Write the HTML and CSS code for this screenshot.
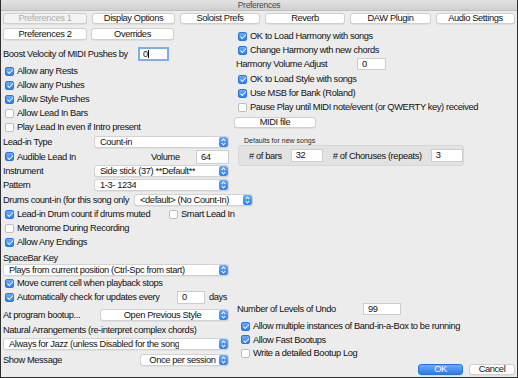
FILE: index.html
```html
<!DOCTYPE html>
<html lang="en">
  <head>
    <meta charset="UTF-8" />
    <title>Preferences</title>
    <link rel="stylesheet" href="styles.css">
  </head>
  <body>
    <div class="window">
      <div class="titlebar">Preferences</div>

      <div class="tabs">
        <button class="btn disabled">Preferences 1</button>
        <button class="btn">Display Options</button>
        <button class="btn">Soloist Prefs</button>
        <button class="btn">Reverb</button>
        <button class="btn">DAW Plugin</button>
        <button class="btn">Audio Settings</button>
      </div>

      <div class="main">
        <!-- left column -->
        <div class="col left">
          <div class="row btn-row">
            <button class="btn w84">Preferences 2</button>
            <button class="btn w83">Overrides</button>
          </div>
          <div class="row boost">
            <span class="lbl w135">Boost Velocity of MIDI Pushes by</span>
            <span class="field focus">0</span>
          </div>
          <div class="row mt3"><span class="cb on"></span>Allow any Rests</div>
          <div class="row"><span class="cb on"></span>Allow any Pushes</div>
          <div class="row"><span class="cb on"></span>Allow Style Pushes</div>
          <div class="row"><span class="cb"></span>Allow Lead In Bars</div>
          <div class="row"><span class="cb"></span>Play Lead In even if Intro present</div>
          <div class="row h15">
            <span class="lbl w91">Lead-in Type</span>
            <div class="sel w135"><span>Count-in</span><i class="step"></i></div>
          </div>
          <div class="row h15">
            <span class="cb on"></span>Audible Lead In
            <span class="lbl vol">Volume</span>
            <span class="field w33">64</span>
          </div>
          <div class="row">
            <span class="lbl w91">Instrument</span>
            <div class="sel w135"><span>Side stick (37) **Default**</span><i class="step"></i></div>
          </div>
          <div class="row">
            <span class="lbl w91">Pattern</span>
            <div class="sel w135"><span>1-3- 1234</span><i class="step"></i></div>
          </div>
          <div class="row h15">
            <span class="lbl w131">Drums count-in (for this song only</span>
            <div class="sel w119"><span>&lt;default&gt; (No Count-In)</span><i class="step"></i></div>
          </div>
          <div class="row">
            <span class="lbl w164"><span class="cb on"></span>Lead-in Drum count if drums muted</span>
            <span class="cb"></span>Smart Lead In
          </div>
          <div class="row"><span class="cb"></span>Metronome During Recording</div>
          <div class="row"><span class="cb on"></span>Allow Any Endings</div>
          <div class="row caption">SpaceBar Key</div>
          <div class="row h13">
            <div class="sel full"><span>Plays from current position (Ctrl-Spc from start)</span><i class="step"></i></div>
          </div>
          <div class="row"><span class="cb on"></span>Move current cell when playback stops</div>
          <div class="row">
            <span class="lbl w174"><span class="cb on"></span>Automatically check for updates every</span>
            <span class="field w28">0</span>
            <span class="days">days</span>
          </div>
          <div class="row h15 mt3">
            <span class="lbl w97">At program bootup...</span>
            <div class="sel w129"><span class="center">Open Previous Style</span><i class="step"></i></div>
          </div>
          <div class="row mt1">Natural Arrangements (re-interpret complex chords)</div>
          <div class="row h13">
            <div class="sel full"><span>Always for Jazz (unless Disabled for the song</span><i class="step"></i></div>
          </div>
          <div class="row h15 mt2">
            <span class="lbl">Show Message</span>
            <div class="sel w89 push"><span class="center">Once per session</span><i class="step"></i></div>
          </div>
        </div>

        <!-- right column -->
        <div class="col right">
          <div class="row mt2 pl2"><span class="cb on"></span>OK to Load Harmony with songs</div>
          <div class="row pl2"><span class="cb on"></span>Change Harmony wth new chords</div>
          <div class="row pl2">
            <span class="lbl w121">Harmony Volume Adjust</span>
            <span class="field w29">0</span>
          </div>
          <div class="row mt1 pl2"><span class="cb on"></span>OK to Load Style with songs</div>
          <div class="row pl2"><span class="cb on"></span>Use MSB for Bank (Roland)</div>
          <div class="row pl2"><span class="cb"></span>Pause Play until MIDI note/event (or QWERTY key) received</div>
          <div class="row mt1">
            <button class="btn midi">MIDI file</button>
          </div>

          <div class="group-title">Defaults for new songs</div>
          <div class="group">
            <span class="lbl">#&nbsp;of bars</span>
            <span class="field w32 bars">32</span>
            <span class="lbl choruses">#&nbsp;of Choruses (repeats)</span>
            <span class="field w32">3</span>
          </div>

          <div class="bottom">
            <div class="row pl3">
              <span class="lbl w126">Number of Levels of Undo</span>
              <span class="field w38">99</span>
            </div>
            <div class="row mt3 pl5"><span class="cb on"></span>Allow multiple instances of Band-in-a-Box to be running</div>
            <div class="row h13 pl5"><span class="cb on"></span>Allow Fast Bootups</div>
            <div class="row pl5"><span class="cb"></span>Write a detailed Bootup Log</div>
            <div class="actions">
              <button class="btn ok">OK</button>
              <button class="btn cancel">Cancel</button>
            </div>
          </div>
        </div>
      </div>
    </div>
  </body>
</html>
```

FILE: styles.css
```css
* {
  margin: 0;
  padding: 0;
  box-sizing: border-box;
}

body {
  background-color: #ececec;
  font-family: "Liberation Sans", Arial, sans-serif;
  font-size: 9.3px;
  letter-spacing: -0.38px;
  color: #111111;
}

.window {
  width: 518px;
  height: 378px;
  background-color: #ececec;
  border: 1px solid #2e2e2e;
  border-top: none;
  padding: 0 1px;
  display: flex;
  flex-direction: column;
  overflow: hidden;
}

.titlebar {
  height: 11px;
  margin: 0 -1px;
  background: linear-gradient(#e2e2e2, #d0d0d0);
  border-bottom: 1px solid #c0c0c0;
  text-align: center;
  font-size: 8.5px;
  letter-spacing: -0.3px;
  line-height: 10px;
  color: #4a4a4a;
}

/* buttons */

.btn {
  height: 11px;
  background-color: #ffffff;
  border: 1px solid #cfcfcf;
  border-radius: 3px;
  box-shadow: 0 0.5px 0.5px rgba(0, 0, 0, 0.12);
  font-family: inherit;
  font-size: 9.3px;
  letter-spacing: -0.38px;
  line-height: 9px;
  color: #111111;
  text-align: center;
}

.btn.disabled {
  background-color: #f3f3f3;
  color: #adadad;
}

.tabs {
  display: grid;
  grid-template-columns: 84px 83px 80px 80px 81px 79px;
  column-gap: 5px;
  padding: 2px 0 0 1px;
}

.main {
  flex: 1;
  display: flex;
  margin-top: 3px;
}

.col {
  display: flex;
  flex-direction: column;
}

.left {
  width: 226px;
  margin-left: 1px;
}

.right {
  flex: 1;
  margin-left: 5px;
}

/* rows */

.row {
  height: 14px;
  display: flex;
  align-items: center;
  white-space: nowrap;
  flex: none;
}

.h13 { height: 13px; }
.h15 { height: 15px; }
.mt1 { margin-top: 1px; }
.mt2 { margin-top: 2px; }
.mt3 { margin-top: 3px; }
.pl2 { padding-left: 2px; }
.pl3 { padding-left: 3px; }
.pl5 { padding-left: 5px; }

.btn-row {
  gap: 4px;
}

.btn-row .btn {
  height: 12px;
}

.w84 { width: 84px; }
.w83 { width: 83px; }

.boost {
  margin-top: 6px;
}

.lbl {
  display: flex;
  align-items: center;
  flex: none;
  overflow: hidden;
}

.w91 { width: 91px; }
.w97 { width: 97px; }
.w121 { width: 121px; }
.w126 { width: 126px; }
.w131 { width: 131px; }
.w135 { width: 135px; }
.w164 { width: 164px; }
.w174 { width: 174px; }

.caption {
  padding-top: 3px;
}

/* checkboxes */

.cb {
  width: 9px;
  height: 9px;
  margin: 0 3px 0 2px;
  flex: none;
  background-color: #ffffff;
  border: 1px solid #bdbdbd;
  border-radius: 2px;
  position: relative;
}

.cb.on {
  background: linear-gradient(#6aacfa, #2f80f0);
  border-color: #2a75e0;
}

.cb.on::after {
  content: "";
  position: absolute;
  left: 2.5px;
  top: 0.5px;
  width: 2px;
  height: 4.5px;
  border-right: 1.5px solid #ffffff;
  border-bottom: 1.5px solid #ffffff;
  transform: rotate(45deg);
}

/* text fields */

.field {
  height: 13px;
  background-color: #ffffff;
  border: 1px solid #cdcdcd;
  padding-left: 4px;
  line-height: 11px;
  flex: none;
}

.field.focus {
  width: 31px;
  height: 14px;
  border: 2px solid #7eaaf0;
  padding-left: 3px;
  line-height: 10px;
}

.field.focus::after {
  content: "";
  display: inline-block;
  width: 1px;
  height: 8px;
  background-color: #000000;
  vertical-align: -1px;
}

.w28 { width: 28px; }
.w29 { width: 29px; height: 12px; }
.w32 { width: 32px; }
.w33 { width: 33px; height: 14px; line-height: 12px; }
.w38 { width: 38px; height: 12px; line-height: 10px; }

.vol {
  margin-left: auto;
  width: 45px;
}

.days {
  margin-left: 4px;
}

/* popups */

.sel {
  height: 12px;
  flex: none;
  display: flex;
  align-items: center;
  justify-content: space-between;
  background-color: #ffffff;
  border: 1px solid #d2d2d2;
  border-radius: 3px;
  box-shadow: 0 0.5px 0.5px rgba(0, 0, 0, 0.1);
  padding-left: 5px;
  overflow: hidden;
}

.sel span {
  overflow: hidden;
}

.sel span.center {
  flex: 1;
  text-align: center;
}

.sel.full { width: 226px; }
.sel.w135 { width: 135px; }
.sel.w129 { width: 129px; }
.sel.w119 { width: 119px; }
.sel.w89 { width: 89px; }

.push {
  margin-left: auto;
}

.step {
  width: 9px;
  height: 10px;
  flex: none;
  background: linear-gradient(#66aafa, #2e7ef0);
  border-radius: 2px;
  position: relative;
}

.step::before,
.step::after {
  content: "";
  position: absolute;
  left: 3px;
  width: 2px;
  height: 2px;
  border-left: 1px solid #ffffff;
  border-top: 1px solid #ffffff;
}

.step::before {
  top: 2px;
  transform: rotate(45deg);
}

.step::after {
  top: 5px;
  transform: rotate(225deg);
}

/* right column */

.midi {
  width: 82px;
  height: 11px;
}

.group-title {
  margin: 8px 0 0 10px;
  height: 8px;
  font-size: 7px;
  letter-spacing: 0;
  line-height: 8px;
  color: #2a2a2a;
}

.group {
  width: 226px;
  height: 21px;
  margin-left: 4px;
  display: flex;
  align-items: center;
  padding-left: 10px;
  background-color: #e2e2e2;
  border: 1px solid #d8d8d8;
  border-radius: 3px;
  white-space: nowrap;
}

.group .lbl {
  flex: none;
}

.bars {
  margin-left: 9px;
}

.choruses {
  width: 98px;
  margin-left: 10px;
}

.bottom {
  margin-top: auto;
  display: flex;
  flex-direction: column;
}

.actions {
  height: 15px;
  margin-top: 2px;
  display: flex;
  align-items: center;
  justify-content: flex-end;
  gap: 6px;
  padding-right: 1px;
}

.ok {
  width: 45px;
  background: linear-gradient(#6aaaf9, #2a7bef);
  border-color: #2a73dc;
  color: #ffffff;
}

.cancel {
  width: 46px;
}
```
